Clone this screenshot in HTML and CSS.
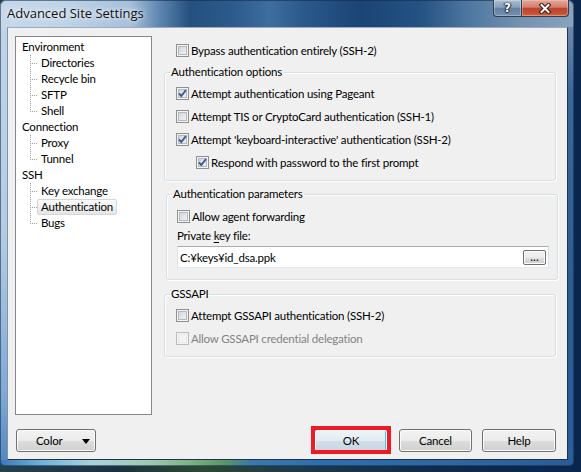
FILE: index.html
```html
<!DOCTYPE html>
<html>
<head>
<meta charset="utf-8">
<title>Advanced Site Settings</title>
<link rel="stylesheet" href="styles.css">
</head>
<body>
<div class="window">
  <div class="titlebar">
    <div class="title">Advanced Site Settings</div>
    <div class="caps">
      <div class="cap cap-help">?</div>
      <div class="cap cap-close">
        <svg width="14" height="11" viewBox="0 0 14 11"><path d="M3.5 2 L10.5 9 M10.5 2 L3.5 9" stroke="#3a1712" stroke-width="4" stroke-linecap="square" fill="none"/><path d="M3.5 2 L10.5 9 M10.5 2 L3.5 9" stroke="#ffffff" stroke-width="2" stroke-linecap="square" fill="none"/></svg>
      </div>
    </div>
  </div>
  <div class="client">
    <div class="main">
      <div class="tree">
        <div class="trow"><span class="tlabel">Environment</span></div>
        <div class="trow tchild"><span class="tlabel">Directories</span></div>
        <div class="trow tchild"><span class="tlabel">Recycle bin</span></div>
        <div class="trow tchild"><span class="tlabel">SFTP</span></div>
        <div class="trow tchild tlast"><span class="tlabel">Shell</span></div>
        <div class="trow"><span class="tlabel">Connection</span></div>
        <div class="trow tchild"><span class="tlabel">Proxy</span></div>
        <div class="trow tchild tlast"><span class="tlabel">Tunnel</span></div>
        <div class="trow"><span class="tlabel">SSH</span></div>
        <div class="trow tchild"><span class="tlabel">Key exchange</span></div>
        <div class="trow tchild tselected"><span class="tlabel">Authentication</span></div>
        <div class="trow tchild tlast"><span class="tlabel">Bugs</span></div>
      </div>
      <div class="panel">
        <div class="check top-check"><span class="cb"></span>Bypass authentication entirely (SSH-2)</div>
        <fieldset class="group g1">
          <legend>Authentication options</legend>
          <div class="gbody">
            <div class="check"><span class="cb"><svg class="tick" width="11" height="11" viewBox="0 0 11 11"><path d="M2 5.3 L4.3 8 L9 2" fill="none" stroke="#3d5595" stroke-width="1.9"/></svg></span>Attempt authentication using Pageant</div>
            <div class="check"><span class="cb"></span>Attempt TIS or CryptoCard authentication (SSH-1)</div>
            <div class="check"><span class="cb"><svg class="tick" width="11" height="11" viewBox="0 0 11 11"><path d="M2 5.3 L4.3 8 L9 2" fill="none" stroke="#3d5595" stroke-width="1.9"/></svg></span>Attempt 'keyboard-interactive' authentication (SSH-2)</div>
            <div class="check indent"><span class="cb"><svg class="tick" width="11" height="11" viewBox="0 0 11 11"><path d="M2 5.3 L4.3 8 L9 2" fill="none" stroke="#3d5595" stroke-width="1.9"/></svg></span>Respond with password to the first prompt</div>
          </div>
        </fieldset>
        <fieldset class="group g2">
          <legend>Authentication parameters</legend>
          <div class="gbody">
            <div class="check"><span class="cb"></span>Allow agent forwarding</div>
            <div class="field-label">Private <u>k</u>ey file:</div>
            <div class="keyfile">
              <span class="keytext">C:¥keys¥id_dsa.ppk</span>
              <span class="browse">...</span>
            </div>
          </div>
        </fieldset>
        <fieldset class="group g3">
          <legend>GSSAPI</legend>
          <div class="gbody">
            <div class="check"><span class="cb"></span>Attempt GSSAPI authentication (SSH-2)</div>
            <div class="check disabled"><span class="cb"></span>Allow GSSAPI credential delegation</div>
          </div>
        </fieldset>
      </div>
    </div>
    <div class="buttons">
      <div class="btn btn-color"><span class="btn-text">Color</span><span class="caret"></span></div>
      <div class="spacer"></div>
      <div class="btn btn-ok">OK</div>
      <div class="btn btn-cancel">Cancel</div>
      <div class="btn btn-help">Help</div>
    </div>
  </div>
</div>
</body>
</html>
```

FILE: styles.css
```css
* { box-sizing: border-box; }

html, body {
  margin: 0;
  padding: 0;
}

body {
  width: 581px;
  height: 472px;
  overflow: hidden;
  background: linear-gradient(to right, #24404e 0, #1b3141 20%, #2c4733 35%, #1d3b4a 50%, #0f2a4c 75%, #0b264d 100%);
  font-family: Lato, "Open Sans", sans-serif;
  font-size: 11.5px;
  letter-spacing: -0.2px;
  color: #000;
}

.window {
  width: 574px;
  height: 466px;
  display: flex;
  flex-direction: column;
  border-radius: 6px 6px 5px 5px;
  background:
    linear-gradient(to right, #c6d8ea 0, #c0d4e8 60px, #a6c0db 130px, #5d85b0 160px, #24507f 190px, #2b5a8a 230px, #3e6e9d 270px, #2a5889 305px, #1a4575 360px, #245283 420px, #4f78a1 470px, #7391b0 520px, #8ba3bd 574px) left top / 100% 27px no-repeat,
    linear-gradient(to right, #3a78b8 0, #6fb0d8 40px, #a8d2dc 90px, #9fcab0 150px, #7bb283 190px, #5a9468 225px, #3a7aa8 250px, #2f6eae 320px, #2d64a0 480px, #2a5c96 574px) left bottom / 100% 6px no-repeat,
    linear-gradient(to bottom, #c2d6ea 0, #b3cce4 50%, #7fa9d4 85%, #4f86bf 100%) left top / 7px 100% no-repeat,
    linear-gradient(to bottom, #7d98b6 0, #3a6698 20%, #2b5d95 60%, #2a5e99 100%) right top / 6px 100% no-repeat,
    #3f6f9f;
  box-shadow: inset 0 0 0 1px rgba(20, 40, 70, 0.55);
}

/* title bar */
.titlebar {
  height: 27px;
  flex: none;
  display: flex;
  justify-content: space-between;
  align-items: flex-start;
  padding: 0 5px 0 7px;
}

.title {
  padding-top: 4px;
  line-height: 18px;
  font-family: "Open Sans", sans-serif;
  font-size: 13px;
  letter-spacing: 0;
  color: #111;
  text-shadow: 0 0 4px rgba(255, 255, 255, 0.9), 0 0 9px rgba(255, 255, 255, 0.8);
}

.caps {
  display: flex;
  height: 17px;
}

.cap {
  height: 17px;
  display: flex;
  align-items: center;
  justify-content: center;
  border: 1px solid #2d3f57;
  border-top: none;
}

.cap-help {
  width: 28px;
  border-radius: 0 0 0 4px;
  border-right: none;
  background: linear-gradient(to bottom, #a9bccf 0, #8aa1bb 45%, #64809f 52%, #7590ae 100%);
  box-shadow: inset 0 0 0 1px rgba(255, 255, 255, 0.3);
  color: #fff;
  font-family: "DejaVu Sans", sans-serif;
  font-weight: bold;
  font-size: 12px;
  letter-spacing: 0;
  line-height: 14px;
  text-shadow: 0 0 1px #1c2a3c, 1px 0 1px #1c2a3c, -1px 0 1px #1c2a3c, 0 1px 1px #1c2a3c;
}

.cap-close {
  width: 48px;
  border-radius: 0 0 4px 0;
  background: linear-gradient(to bottom, #e4a99b 0, #d27f6c 45%, #bd4430 52%, #c44e34 80%, #d4683f 100%);
  box-shadow: inset 0 0 0 1px rgba(255, 220, 210, 0.35);
}

.cap-close svg { display: block; }

/* client area */
.client {
  flex: 1;
  margin: 0 6px 6px 7px;
  background: #f0f0f0;
  border: 1px solid;
  border-color: #9eacba #1d3350 #1d3350 #8193a8;
  padding: 8px 10px 7px 7px;
  display: flex;
  flex-direction: column;
}

.main {
  height: 379px;
  flex: none;
  display: flex;
  gap: 12px;
}

/* tree */
.tree {
  width: 137px;
  height: 379px;
  flex: none;
  background: #fff;
  border: 1px solid #828790;
  padding-top: 2px;
}

.trow {
  position: relative;
  height: 16px;
  display: flex;
  align-items: center;
  padding-left: 2px;
  white-space: nowrap;
}

.tlabel {
  height: 16px;
  line-height: 14px;
  padding: 0 3px;
  border: 1px solid transparent;
  border-radius: 2px;
}

.tchild { padding-left: 21px; }

.tchild::before {
  content: "";
  position: absolute;
  left: 14px;
  top: 0;
  width: 1px;
  height: 16px;
  background: repeating-linear-gradient(to bottom, #a0a0a0 0 1px, transparent 1px 2px);
}

.tlast::before { height: 9px; }

.tchild::after {
  content: "";
  position: absolute;
  left: 14px;
  top: 8px;
  width: 7px;
  height: 1px;
  background: repeating-linear-gradient(to right, #a0a0a0 0 1px, transparent 1px 2px);
}

.tselected .tlabel {
  background: linear-gradient(to bottom, #fafafa, #e5e5e5);
  border-color: #d6d6d6;
}

/* right panel */
.panel {
  width: 394px;
  flex: none;
  display: flex;
  flex-direction: column;
  padding-top: 6px;
}

.check {
  height: 23px;
  display: flex;
  align-items: center;
  white-space: nowrap;
}

.top-check {
  height: 17px;
  padding-left: 12px;
}

.indent { padding-left: 20px; }

.cb {
  width: 13px;
  height: 13px;
  flex: none;
  margin-right: 2px;
  border: 1px solid #8e8f8f;
  background: linear-gradient(135deg, #c9cdd3 0, #e4e6e9 55%, #f7f7f7 100%);
  box-shadow: inset 0 0 0 1px #f4f4f4, inset 0 0 0 2px #b4b9bf;
  display: flex;
}

.tick { display: block; }

.disabled { color: #838383; }

.disabled .cb {
  border-color: #bcbcbc;
  background: #f4f4f4;
  box-shadow: inset 0 0 0 1px #f4f4f4, inset 0 0 0 2px #e6e6e6;
}

.group {
  margin: 0;
  padding: 0;
  min-width: 0;
  width: 392px;
  border: 1px solid #d5dfe5;
  border-radius: 3px;
  box-shadow: inset 1px 1px 0 #fff, 1px 1px 0 #fff;
}

.group legend {
  margin-left: 5px;
  padding: 0 1px;
  line-height: 16px;
  height: 16px;
}

.g1 { margin-top: 5px; }
.g1 .gbody { padding: 2px 0 6px 11px; }

.g2 { margin-top: 5px; margin-left: 2px; }
.g2 .gbody { padding: 3px 8px 11px 10px; }

.g3 { margin-top: 6px; }
.g3 .gbody { padding: 2px 0 6px 11px; }

.field-label {
  line-height: 16px;
  height: 16px;
}

.field-label u { text-decoration-thickness: 1px; text-underline-offset: 2px; }

.keyfile {
  margin-top: 2px;
  height: 22px;
  display: flex;
  align-items: center;
  background: #fff;
  border: 1px solid;
  border-color: #abadb3 #dbdfe6 #e3e9ef #e2e3ea;
  padding-left: 2px;
}

.keytext { flex: 1; }

.browse {
  width: 23px;
  height: 15px;
  margin-right: 2px;
  border: 1px solid #707070;
  border-radius: 2px;
  background: linear-gradient(to bottom, #f2f2f2 0, #ebebeb 50%, #dddddd 51%, #cfcfcf 100%);
  box-shadow: inset 0 0 0 1px #fcfcfc;
  text-align: center;
  line-height: 11px;
  font-size: 12px;
  letter-spacing: 0;
}

/* buttons */
.buttons {
  margin-top: 14px;
  height: 23px;
  flex: none;
  display: flex;
  align-items: center;
  padding: 0 1px;
}

.spacer { flex: 1; }

.btn {
  position: relative;
  height: 23px;
  display: flex;
  align-items: center;
  justify-content: center;
  border: 1px solid #707070;
  border-radius: 3px;
  background: linear-gradient(to bottom, #f2f2f2 0, #ebebeb 50%, #dddddd 51%, #cfcfcf 100%);
  box-shadow: inset 0 0 0 1px #fbfbfb;
}

.btn-color {
  width: 80px;
  justify-content: flex-start;
  padding: 0 5px 0 19px;
}

.btn-color .btn-text { flex: 1; }

.caret {
  width: 0;
  height: 0;
  border-left: 4px solid transparent;
  border-right: 4px solid transparent;
  border-top: 5px solid #000;
  margin-top: 1px;
}

.btn-ok {
  width: 74px;
  margin-right: 11px;
  border-color: #3c7fb1;
  background: linear-gradient(to bottom, #eef4f9 0, #e3ebf2 50%, #d3dfe9 51%, #c8d6e2 100%);
  box-shadow: inset 0 0 0 1px #fdfdfd, inset -2px 0 0 #48c6f0;
}

.btn-ok::after {
  content: "";
  position: absolute;
  left: -4px;
  right: -4px;
  top: -4px;
  bottom: -3px;
  border: 4px solid #ed1c24;
  pointer-events: none;
}

.btn-cancel {
  width: 73px;
  margin-right: 10px;
}

.btn-help {
  width: 74px;
}
```
